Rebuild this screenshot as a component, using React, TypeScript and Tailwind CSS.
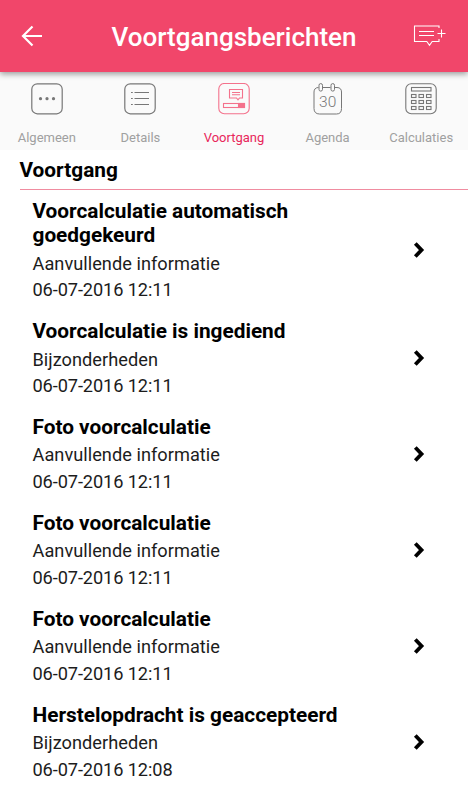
import React from "react"

// -------------------------------------------------------------------
// Types
// -------------------------------------------------------------------

type TabId = "algemeen" | "details" | "voortgang" | "agenda" | "calculaties"

interface ProgressMessage {
  id: number
  title: string
  description: string
  date: string
}

// -------------------------------------------------------------------
// Data
// -------------------------------------------------------------------

const MESSAGES: ProgressMessage[] = [
  { id: 1, title: "Voorcalculatie automatisch goedgekeurd", description: "Aanvullende informatie", date: "06-07-2016 12:11" },
  { id: 2, title: "Voorcalculatie is ingediend", description: "Bijzonderheden", date: "06-07-2016 12:11" },
  { id: 3, title: "Foto voorcalculatie", description: "Aanvullende informatie", date: "06-07-2016 12:11" },
  { id: 4, title: "Foto voorcalculatie", description: "Aanvullende informatie", date: "06-07-2016 12:11" },
  { id: 5, title: "Foto voorcalculatie", description: "Aanvullende informatie", date: "06-07-2016 12:11" },
  { id: 6, title: "Herstelopdracht is geaccepteerd", description: "Bijzonderheden", date: "06-07-2016 12:08" },
]

// -------------------------------------------------------------------
// Icons
// -------------------------------------------------------------------

const iconProps = {
  width: 32,
  height: 32,
  viewBox: "0 0 32 32",
  fill: "none",
  stroke: "currentColor",
  strokeWidth: 1.2,
}

function GeneralIcon() {
  return (
    <svg {...iconProps}>
      <rect x="0.8" y="0.8" width="30.4" height="30" rx="5.5" />
      <g fill="currentColor" stroke="none">
        <circle cx="9.5" cy="15.7" r="1.6" />
        <circle cx="16" cy="15.7" r="1.6" />
        <circle cx="22.5" cy="15.7" r="1.6" />
      </g>
    </svg>
  )
}

function DetailsIcon() {
  return (
    <svg {...iconProps}>
      <rect x="0.8" y="0.8" width="30.4" height="30" rx="5.5" />
      <path d="M7 9.5h1.8M10.5 9.5h14.5M7 15.5h1.8M10.5 15.5h14.5M7 21.5h1.8M10.5 21.5h14.5" />
    </svg>
  )
}

function ProgressIcon() {
  return (
    <svg {...iconProps} strokeWidth={1.1}>
      <rect x="0.8" y="0.5" width="30.4" height="30.2" rx="5.5" />
      <path d="M11.5 6.5h13v8.5h-3l-1.5 1.8-1.5-1.8h-7zM14 9.5h8M14 11.8h8" />
      <rect x="5.5" y="20.5" width="21" height="4" />
      <rect x="20.5" y="20.5" width="6" height="4" fill="currentColor" />
    </svg>
  )
}

function AgendaIcon() {
  return (
    <svg {...iconProps} strokeWidth={1}>
      <path d="M6.5 4.5C3.5 4.5 2 6.3 2 9v16.5C2 29 4 31 7.5 31h17c3.5 0 5-2 5-5.5V9c0-2.7-1.5-4.5-4.5-4.5M10.5 4.5h8M22.5 4.5h2.5" />
      <rect x="7" y="0.6" width="3.5" height="7.5" rx="1.7" />
      <rect x="19" y="0.6" width="3.5" height="7.5" rx="1.7" />
      <text
        x="15.7"
        y="24.2"
        textAnchor="middle"
        fill="currentColor"
        stroke="none"
        fontSize="15.5"
        fontFamily="Roboto, sans-serif"
        fontWeight="300"
      >
        30
      </text>
    </svg>
  )
}

const CALC_ROWS = [11.5, 17.5, 23.5]
const CALC_COLS = [6.5, 14, 21.5]

function CalculatorIcon() {
  return (
    <svg {...iconProps} strokeWidth={1.1}>
      <rect x="0.8" y="0.8" width="30.4" height="30" rx="5.5" />
      <rect x="6.5" y="4.5" width="19.5" height="3.5" />
      {CALC_ROWS.map((y) =>
        CALC_COLS.map((x) => <rect key={`${x}-${y}`} x={x} y={y} width="4.5" height="3" />)
      )}
    </svg>
  )
}

function BackIcon() {
  return (
    <svg width="22" height="22" viewBox="0 0 22 22" fill="none" stroke="currentColor" strokeWidth="2.2">
      <path d="M21 11H1.7M11.5 1.5 2 11l9.5 9.5" />
    </svg>
  )
}

function NewMessageIcon() {
  return (
    <svg width="34" height="22" viewBox="0 0 34 22" fill="none" stroke="currentColor" strokeWidth="1.1">
      <path d="M26 3V1H1.5v15.5h12.3l2.7 3.7 2.7-3.7H26V14M6 6.5h15M6 10.500h15M28.500 4.500v8M24.500 8.500h8" />
    </svg>
  )
}

function ChevronIcon() {
  return (
    <svg width="12" height="16" viewBox="0 0 12 16" fill="none" stroke="currentColor" strokeWidth="3.8">
      <path d="M2.3 1.5 8.5 8l-6.2 6.5" />
    </svg>
  )
}

const TABS: { id: TabId; label: string; icon: React.ReactNode }[] = [
  { id: "algemeen", label: "Algemeen", icon: <GeneralIcon /> },
  { id: "details", label: "Details", icon: <DetailsIcon /> },
  { id: "voortgang", label: "Voortgang", icon: <ProgressIcon /> },
  { id: "agenda", label: "Agenda", icon: <AgendaIcon /> },
  { id: "calculaties", label: "Calculaties", icon: <CalculatorIcon /> },
]

// -------------------------------------------------------------------
// Components
// -------------------------------------------------------------------

function TabBar({ active }: { active: TabId }) {
  return (
    <nav className="flex h-[78px] bg-[#fafafa]">
      {TABS.map((tab) => {
        const isActive = tab.id === active
        return (
          <button key={tab.id} className="flex flex-1 basis-0 flex-col items-center pt-[11px]">
            <span className={isActive ? "text-[#f4728c]" : "text-[#777]"}>{tab.icon}</span>
            <span
              className={`mt-[15px] text-[13px] leading-4 ${
                isActive ? "text-[#e8265a]" : "text-[#a0a0a0]"
              }`}
            >
              {tab.label}
            </span>
          </button>
        )
      })}
    </nav>
  )
}

function MessageRow({ message }: { message: ProgressMessage }) {
  return (
    <li className="flex items-center pr-[43px] pb-[15.5px]">
      <div className="min-w-0 flex-1">
        <h3 className="max-w-[320px] text-[20.8px] leading-6 font-bold">{message.title}</h3>
        <div className="mt-[3.6px] text-[18.2px] leading-[26.4px] text-[#1c1c1c]">
          <p className="tracking-[0.03px]">{message.description}</p>
          <p className="tracking-[-0.1px]">{message.date}</p>
        </div>
      </div>
      <span className="pb-[2px]">
        <ChevronIcon />
      </span>
    </li>
  )
}

export default function App() {
  return (
    <div className="h-[800px] w-[468px] overflow-hidden bg-white font-['Roboto',sans-serif] text-black">
      <header className="relative flex h-[72px] items-center bg-[#f1466a] pr-[21px] pl-[21px] text-white shadow-[0_2px_6px_rgba(0,0,0,0.4)]">
        <BackIcon />
        <h1 className="flex-1 pt-[2px] pl-3 text-center text-[26px] font-medium">Voortgangsberichten</h1>
        <NewMessageIcon />
      </header>

      <TabBar active="voortgang" />

      <main>
        <h2 className="ml-[19.5px] h-10 border-b border-[#f08ca0] text-[20.8px] leading-10 font-bold">
          Voortgang
        </h2>
        <ul className="mt-[9px] pl-[32.5px]">
          {MESSAGES.map((message) => (
            <MessageRow key={message.id} message={message} />
          ))}
        </ul>
      </main>
    </div>
  )
}
